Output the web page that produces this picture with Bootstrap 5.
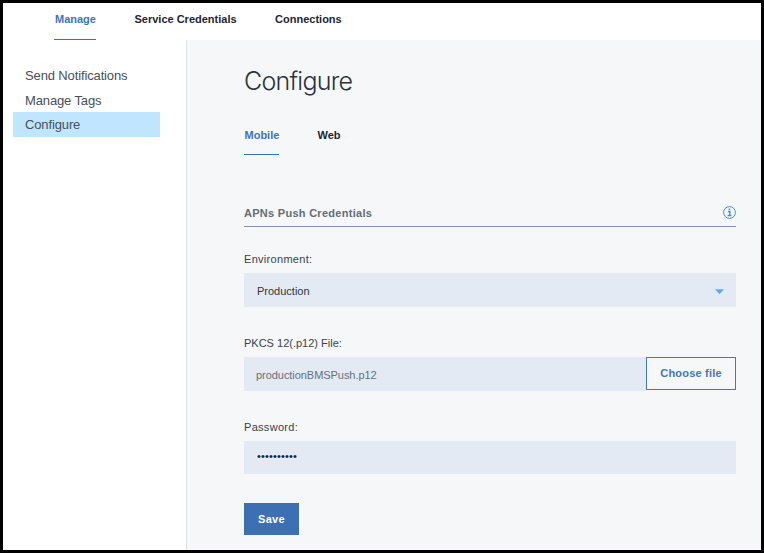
<!DOCTYPE html>
<html lang="en">
<head>
<meta charset="utf-8">
<meta name="viewport" content="width=device-width, initial-scale=1">
<title>Configure</title>
<link href="https://cdn.jsdelivr.net/npm/bootstrap@5.3.0/dist/css/bootstrap.min.css" rel="stylesheet">
<style>
body{font:11px/16px "Liberation Sans",Arial,sans-serif;color:#303740;background:#fff}
.frame{height:553px;border:3px solid #000}
.topbar{height:37px;padding-left:51px;gap:38px}
.tab{font-size:11px;line-height:16px;font-weight:700;color:#1d2530;padding:0 0 0 1px;border-bottom:1px solid transparent}
.tab:hover,.tab.active{color:#4272bb}
.tab.active{border-bottom-color:#3b6fba}
.topbar .tab{padding-top:8px;height:37px}
.topbar .tab + .tab{margin-left:-.5px}
.side{width:184px;border-right:1px solid #dde1e5;padding:23px 26px 0 10px}
.side .nav-link{font-size:13px;line-height:26px;height:24.5px;padding:0 0 0 12px;color:#45505a;letter-spacing:-.13px}
.side .nav-link.active{background:#c0e6ff;height:25px}
.content{background:#f5f7f9;padding:22px 25px 0 57px}
.title{font:300 25px/38px Inter,"Liberation Sans",sans-serif;color:#2a323c;letter-spacing:-.75px;height:36px}
.subtabs{gap:37px;margin-top:28px}
.subtabs .tab{height:29px;padding:1px 0 0 .5px}
.subtabs .tab + .tab{margin-left:.7px}
.section-head{margin-top:47px;height:25px;border-bottom:1px solid #8093ad;color:#646d76}
.section-head strong{padding-top:3px;letter-spacing:.28px}
.lbl{height:16px;margin-top:28px;margin-bottom:6px;color:#3a424c}
.lbl.env{margin-top:24px}
.spaced{letter-spacing:.3px}
.field{height:34px;background:#e3eaf4;padding-left:13px}
.field-text{padding-top:2px}
.file{color:#66707c;padding-left:12px;letter-spacing:-.05px}
.pass{height:33px;color:#1d2530;letter-spacing:.15px;padding-bottom:3px}
.choose,.save{font-size:11px;line-height:16px;font-weight:700;border-radius:0;padding:0 0 1px;letter-spacing:.2px}
.choose{width:90px;height:33px;border:1px solid #4178be;color:#4178be;background:#f5f7f9}
.save{width:55px;height:32px;margin-top:29px;background:#3d70b2;color:#fff;border:0;letter-spacing:.3px;padding:0}
</style>
<script src="https://cdn.jsdelivr.net/npm/bootstrap@5.3.0/dist/js/bootstrap.bundle.min.js"></script>
</head>
<body>
<div class="frame d-flex flex-column overflow-hidden">
  <nav class="topbar nav flex-nowrap flex-shrink-0">
    <a class="nav-link tab active" href="#">Manage</a>
    <a class="nav-link tab" href="#">Service Credentials</a>
    <a class="nav-link tab" href="#">Connections</a>
  </nav>
  <div class="d-flex flex-grow-1">
    <aside class="side flex-shrink-0">
      <nav class="nav flex-column">
        <a class="nav-link" href="#">Send Notifications</a>
        <a class="nav-link" href="#">Manage Tags</a>
        <a class="nav-link active" href="#">Configure</a>
      </nav>
    </aside>
    <main class="content flex-grow-1">
      <h1 class="title m-0">Configure</h1>
      <nav class="subtabs nav">
        <a class="nav-link tab active" href="#">Mobile</a>
        <a class="nav-link tab" href="#">Web</a>
      </nav>
      <div class="section-head d-flex justify-content-between">
        <strong>APNs Push Credentials</strong>
        <svg class="mt-1" width="13" height="13" viewBox="0 0 13 13" fill="none" stroke="#4b8ad8"><circle cx="6.5" cy="6.5" r="5.9"/><path d="M5 5.5h1.8V9.5M4.6 9.5h3.8" stroke-width="1.4"/><path d="M5.7 3.3h1.6" stroke-width="1.6"/></svg>
      </div>
      <div class="lbl env spaced">Environment:</div>
      <div class="field d-flex align-items-center justify-content-between">
        <span class="field-text">Production</span>
        <svg class="me-2 mt-1" width="17" height="8" viewBox="0 0 17 8"><path d="M4 1.2h9L8.5 6.2z" fill="#5aaafa"/></svg>
      </div>
      <div class="lbl">PKCS 12(.p12) File:</div>
      <div class="d-flex">
        <div class="field file flex-grow-1 d-flex align-items-center"><span class="field-text">productionBMSPush.p12</span></div>
        <button type="button" class="btn choose">Choose file</button>
      </div>
      <div class="lbl spaced">Password:</div>
      <div class="field pass d-flex align-items-center">••••••••••</div>
      <button type="button" class="btn save">Save</button>
    </main>
  </div>
</div>
</body>
</html>
